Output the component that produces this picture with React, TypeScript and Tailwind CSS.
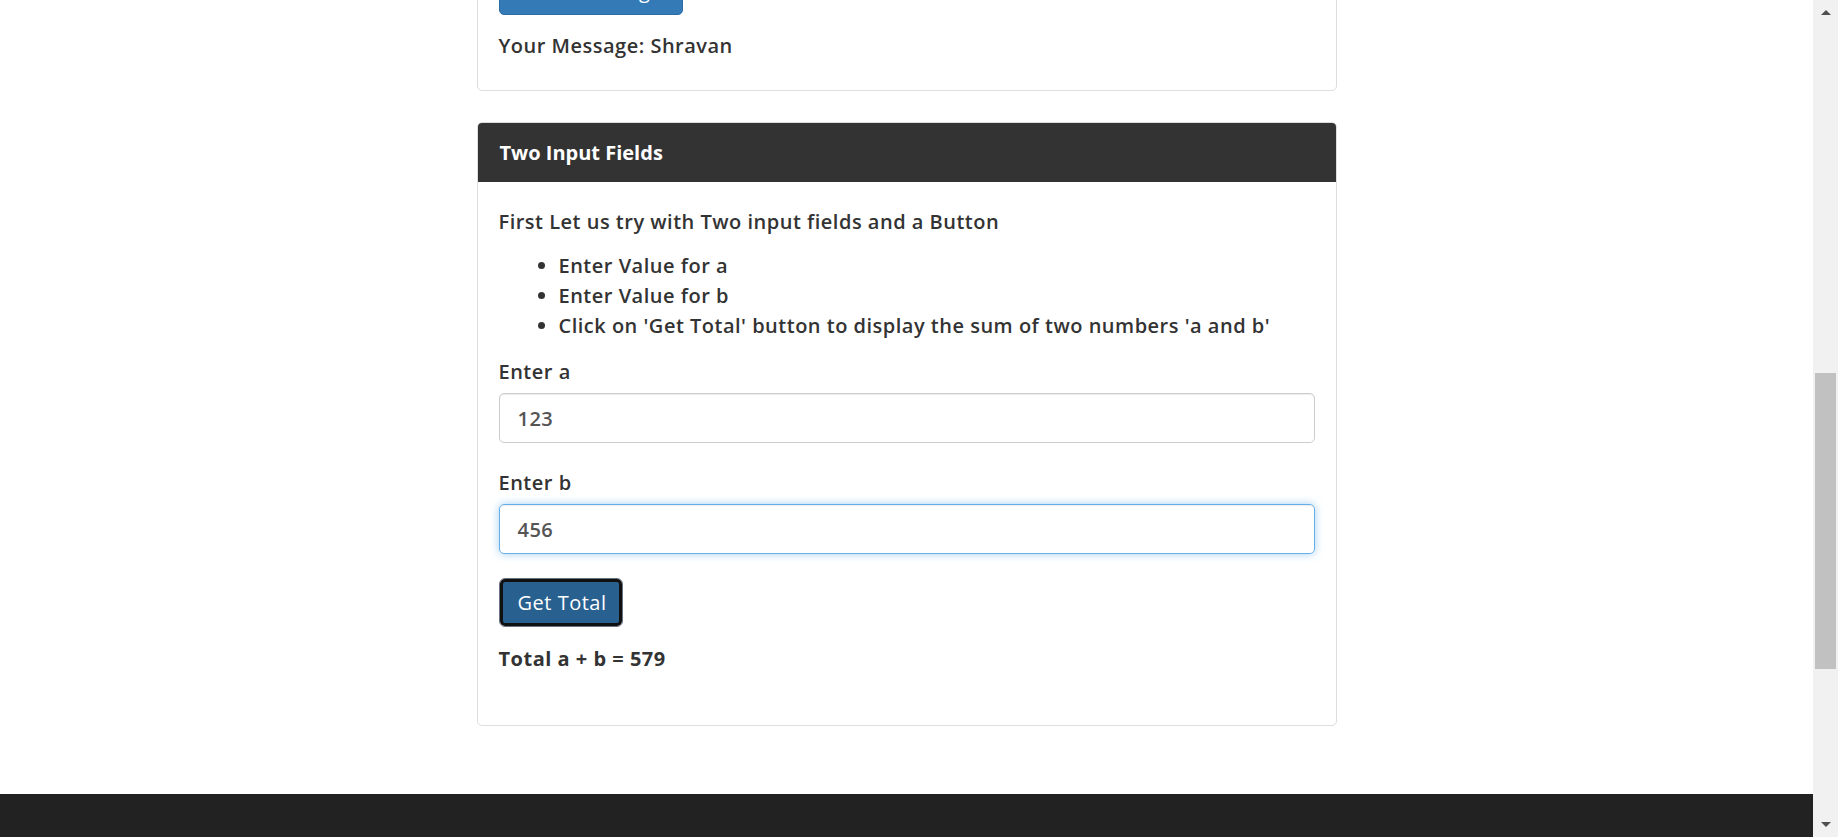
import React from "react";

export default function App() {
  const font = { fontFamily: "'Open Sans', 'Noto Sans', sans-serif" };
  return (
    <div className="flex h-[837px] w-[1838px] overflow-hidden bg-white" style={font}>
      <div className="flex flex-1 flex-col">
        <div className="flex flex-1 flex-col items-center overflow-hidden text-[20px] leading-[30px] tracking-[0.5px] text-[#333]">
          {/* Card 1 (partially scrolled off) */}
          <div className="mt-[-55px] w-[860px] shrink-0 rounded-[5px] border border-[#ddd] bg-white px-[21px] pb-[29px] pt-[20px]">
            <div className="flex h-[49px] w-[184px] items-center justify-center rounded-[5px] border border-[#2e6da4] bg-[#337ab7] text-white">
              Show Message
            </div>
            <p className="mt-[16px] font-semibold">Your Message: Shravan</p>
          </div>

          {/* Card 2 */}
          <div className="mt-[31px] w-[860px] shrink-0 overflow-hidden rounded-[5px] border border-[#ddd] bg-white">
            <div className="flex h-[59px] items-center bg-[#333] px-[22px] pt-px font-bold tracking-normal text-white">
              Two Input Fields
            </div>
            <div className="px-[21px] pb-[51px] pt-[25px] font-semibold">
              <p>First Let us try with Two input fields and a Button</p>
              <ul className="mt-[14px] list-disc pl-[60px]">
                <li>Enter Value for a</li>
                <li>Enter Value for b</li>
                <li>Click on 'Get Total' button to display the sum of two numbers 'a and b'</li>
              </ul>
              <div className="mt-[16px]">Enter a</div>
              <div className="mt-[6px] flex h-[50px] items-center rounded-[5px] border border-[#ccc] px-[18px] pt-px text-[#555] shadow-[inset_0_1px_1px_rgba(0,0,0,0.075)]">
                123
              </div>
              <div className="mt-[25px]">Enter b</div>
              <div className="mt-[6px] flex h-[50px] items-center rounded-[5px] border border-[#66afe9] px-[18px] pt-px text-[#555] shadow-[inset_0_1px_1px_rgba(0,0,0,0.075),0_0_8px_rgba(102,175,233,0.6)]">
                456
              </div>
              <div className="mt-[24px] inline-flex rounded-[6px] border border-[#6b7280] p-0">
                <button className="flex h-[47px] w-[122px] items-center justify-center rounded-[5px] border-[3px] border-[#111] bg-[#286090] pl-[3px] pt-px text-[20px] font-normal tracking-[0.5px] text-white">
                  Get Total
                </button>
              </div>
              <p className="mt-[17px] font-bold">Total a + b = 579</p>
            </div>
          </div>
        </div>
        <div className="h-[43px] shrink-0 bg-[#222]" />
      </div>

      {/* Scrollbar */}
      <div className="relative flex w-[25px] shrink-0 flex-col items-center bg-[#f1f1f1]">
        <div className="mt-[10px] h-0 w-0 border-x-[5px] border-b-[5px] border-x-transparent border-b-[#505050]" />
        <div className="mt-[358px] h-[296px] w-[21px] bg-[#c1c1c1]" />
        <div className="mt-auto mb-[10px] h-0 w-0 border-x-[5px] border-t-[5px] border-x-transparent border-t-[#505050]" />
      </div>
    </div>
  );
}
